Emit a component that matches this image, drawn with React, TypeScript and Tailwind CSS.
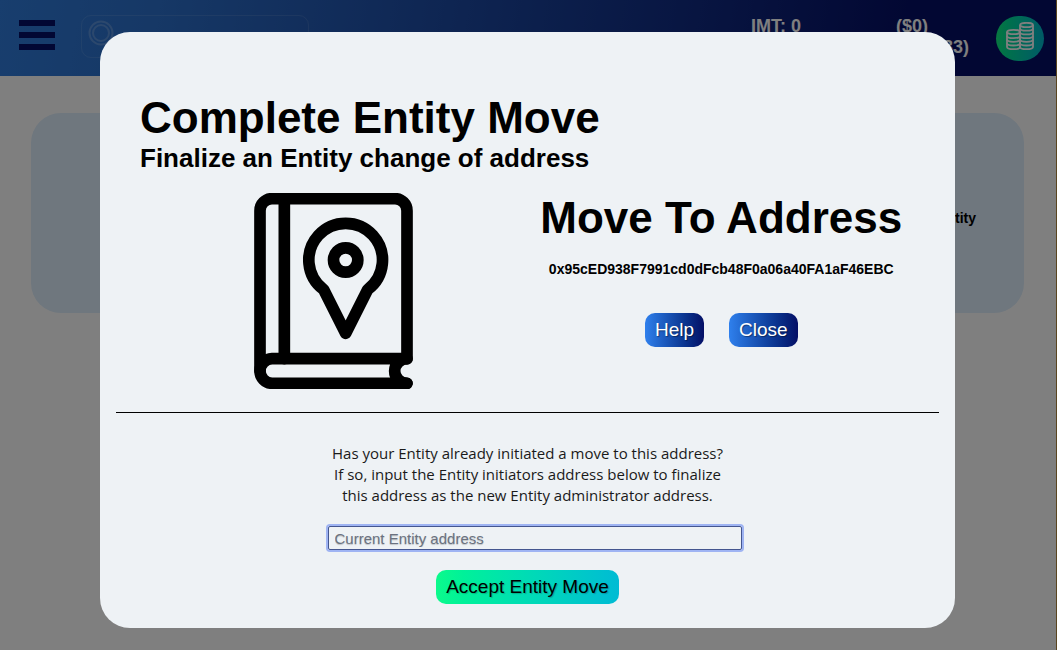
function AddressBookIcon() {
  return (
    <svg
      viewBox="44 39 477 588"
      className="h-[196px] w-[159px]"
      fill="none"
      stroke="black"
      strokeWidth="35"
      strokeLinecap="round"
      strokeLinejoin="round"
      aria-hidden="true"
    >
      <path d="M503 537V92A36 36 0 0 0 467 56H98A36 36 0 0 0 62 92V573A37 37 0 0 0 98 610H503" />
      <path d="M62 573A37 37 0 0 1 98 536H503A37 37 0 0 0 503 610" />
      <path d="M135 56V536" />
      <path d="M253 329A110.500 110.500 0 1 1 385 329L319 460Z" />
      <circle cx="319" cy="240" r="36.500" />
    </svg>
  );
}

function CoinStack({ x, top, count }: { x: number; top: number; count: number }) {
  return (
    <g>
      <ellipse cx={x + 6.5} cy={top} rx="6.500" ry="2.200" />
      <path d={`M${x} ${top}V25M${x + 13} ${top}V25`} />
      {Array.from({ length: count }, (_, i) => (
        <path
          key={i}
          d={`M${x} ${25 - i * 3.7}c0 1.300 3 2.200 6.500 2.200s6.500 -.9 6.500 -2.200`}
        />
      ))}
    </g>
  );
}

function CoinsIcon() {
  return (
    <svg
      viewBox="0 0 30 30"
      className="size-[30px]"
      fill="none"
      stroke="white"
      strokeWidth="1.800"
      aria-hidden="true"
    >
      <CoinStack x={2} top={10} count={4} />
      <CoinStack x={15} top={3} count={6} />
    </svg>
  );
}

function Header() {
  return (
    <header className="flex h-19 items-start bg-[linear-gradient(100deg,#307cdc_0%,#2c70cc_15%,#050f66_85%,#050f66_100%)] pr-[13px] pl-[19px] text-lg leading-[21px] font-bold text-white">
      <button aria-label="Open menu" className="mt-5 flex w-9 flex-col gap-1.5">
        <span className="h-1.5 w-full bg-[#050f66]" />
        <span className="h-1.5 w-full bg-[#050f66]" />
        <span className="h-1.5 w-full bg-[#050f66]" />
      </button>
      <div className="mt-[15px] ml-[26px] h-[43px] w-[228px] rounded-[10px] border border-white/10 px-1.5 pt-1">
        <svg
          viewBox="0 0 26 26"
          className="size-[26px] opacity-20"
          fill="none"
          stroke="white"
          strokeWidth="2"
          aria-hidden="true"
        >
          <circle cx="13" cy="13" r="11.500" />
          <circle cx="13" cy="13" r="8" />
        </svg>
      </div>
      <div className="mt-4 ml-auto">IMT: 0</div>
      <div className="mt-4 mr-[27px] ml-[54px] flex w-[114px] flex-col">
        <span className="text-center">($0)</span>
        <span className="text-right">33)</span>
      </div>
      <button
        aria-label="Wallet"
        className="mt-4 flex h-[45px] w-12 items-start justify-center rounded-[23px] bg-linear-to-r from-[#10ee80] to-[#03b5cc] pt-1.5"
      >
        <CoinsIcon />
      </button>
    </header>
  );
}

function MoveDialog() {
  const blueButton =
    "h-[34px] rounded-[10px] bg-linear-to-r from-[#2f80ed] to-[#050f66] px-2.5 text-[19px] text-white [text-shadow:1px_1px_1px_#00000066]";
  return (
    <section
      role="dialog"
      aria-labelledby="dialog-title"
      className="mt-8 w-full self-start rounded-[30px] bg-[#eef2f5] px-4 pt-[61px] pb-6"
    >
      <div className="px-6">
        <h1 id="dialog-title" className="text-[44px] leading-[50px] font-bold">
          Complete Entity Move
        </h1>
        <h2 className="text-[26px] leading-[30px] font-bold">
          Finalize an Entity change of address
        </h2>
        <div className="mt-5 grid grid-cols-2">
          <div className="flex justify-center">
            <AddressBookIcon />
          </div>
          <div className="flex flex-col items-center">
            <h2 className="text-[44px] leading-[50px] font-bold whitespace-nowrap">
              Move To Address
            </h2>
            <p className="mt-[18px] text-sm leading-4 font-bold">
              0x95cED938F7991cd0dFcb48F0a06a40FA1aF46EBC
            </p>
            <div className="mt-9 flex gap-[25px]">
              <button className={blueButton}>Help</button>
              <button className={blueButton}>Close</button>
            </div>
          </div>
        </div>
      </div>
      <hr className="mt-[23px] border-black" />
      <form className="flex flex-col items-center pt-[30px]">
        <p className="w-[420px] text-center font-['Open_Sans',sans-serif] text-[15px] leading-[21px] text-[#1a1a1a]">
          Has your Entity already initiated a move to this address?
          <br />
          If so, input the Entity initiators address below to finalize
          <br />
          this address as the new Entity administrator address.
        </p>
        <input
          type="text"
          aria-label="Current Entity address"
          placeholder="Current Entity address"
          className="mt-5 ml-3.5 h-6 w-[414px] rounded-[2px] border border-[#44568f] px-1.5 text-[15px] ring-2 ring-[#9fb4f3] outline-none [text-shadow:0px_1px_1px_#00000033] placeholder:text-[#6b7280]"
        />
        <button
          type="button"
          className="mt-5 h-[34px] rounded-[10px] bg-linear-to-r from-[#0cfa8b] to-[#02bbd4] px-2.5 text-[19px] text-black [text-shadow:1px_1px_1px_#00000033]"
        >
          Accept Entity Move
        </button>
      </form>
    </section>
  );
}

export default function App() {
  return (
    <div className="min-h-screen bg-white font-['Liberation_Sans',Arial,sans-serif] text-black">
      <Header />
      <main className="pt-[37px] pr-[33px] pl-[31px]">
        <div className="flex h-[200px] items-center justify-end rounded-[30px] bg-[#deeefc] px-12 pt-2.5 text-sm font-bold">
          Entity
        </div>
      </main>
      <div className="fixed inset-0 flex border-r border-[#5a4520] bg-black/50 pr-[101px] pl-[100px]">
        <MoveDialog />
      </div>
    </div>
  );
}
